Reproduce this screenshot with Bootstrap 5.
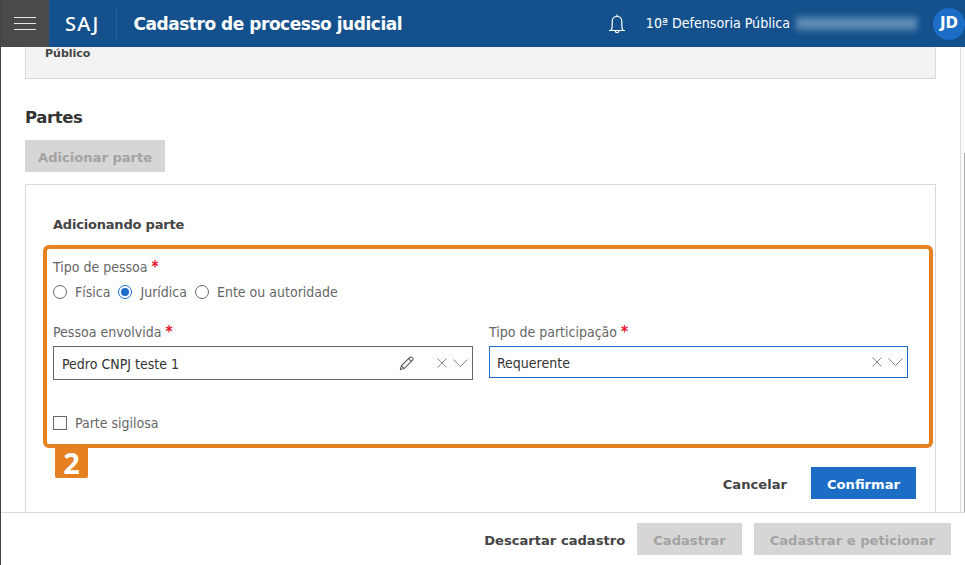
<!DOCTYPE html>
<html lang="pt-BR">
<head>
<meta charset="utf-8">
<title>Cadastro de processo judicial</title>
<link href="https://cdn.jsdelivr.net/npm/bootstrap@5.3.0/dist/css/bootstrap.min.css" rel="stylesheet">
<style>
html,body{height:100%;overflow:hidden}
body{font-family:"DejaVu Sans Condensed","Noto Sans",sans-serif;font-size:14px;color:#666;background:#fff}
.shell{width:965px;height:565px;border-left:1px solid #444}
.topbar{height:47px;background:#14518c;color:#fff}
.menu-btn{width:48px;height:47px;background:#4a4a4a}
.menu-btn span{display:block;width:22px;height:1.5px;background:#e8e8e8;margin-bottom:4.6px}
.menu-btn span:last-child{margin-bottom:0}
.brand{font-family:"Noto Sans",sans-serif;font-size:20px;font-weight:500;letter-spacing:1.2px;margin-left:16px;padding-right:16px;line-height:30px;border-right:1px solid #1d62a6}
.page-title{font-family:"DejaVu Sans",sans-serif;font-weight:700;font-size:17px;margin-left:17px;letter-spacing:-.47px;padding-top:3px}
.org{font-size:14.1px;margin-left:20px}
.blurred{display:inline-block;width:121px;height:13px;margin-left:6px;background:#6a95bd;filter:blur(3px);opacity:.85}
.avatar{width:32px;height:32px;background:#1b6dc6;border-radius:50%;font-family:"DejaVu Sans",sans-serif;font-weight:700;font-size:15px;margin-left:16px}
.main-row{height:465px}
.body-area{flex:1 1 auto;min-width:0;overflow:hidden;padding:0 24px 0 24px;border-right:1px solid #ddd}
.gutter{width:4px;flex:none;background:#fafafa}
.thumb{width:1px;height:359px;margin-left:3px;background:#aaa}
.public-panel{height:32px;background:#f3f3f3;border:1px solid #d9d9d9;border-top:0;padding-left:19px;font-family:"DejaVu Sans",sans-serif;font-weight:700;font-size:11px;color:#444;line-height:14px}
.section-title{font-family:"DejaVu Sans",sans-serif;font-weight:700;font-size:16.5px;color:#333;margin:28px 0 11px;line-height:22px;letter-spacing:-.4px}
.flat-btn{font-family:"DejaVu Sans",sans-serif;font-weight:700;font-size:13.1px;height:32px;padding:4px 16px 0;border:0;border-radius:0}
.flat-btn.off{background:#d6d6d6;color:#a3a3a3}
.flat-btn.main{background:#1b6dc6;color:#fff}
.flat-btn.plain{background:transparent;color:#444;padding:4px 0 0}
.flat-btn.tight{padding:4px 13px 0}
.add-card{margin-top:12px;border:1px solid #d9d9d9;height:340px;padding:0 2px 0 17px}
.card-head{font-family:"DejaVu Sans",sans-serif;font-weight:700;font-size:13px;color:#444;padding:31px 0 0 10px;line-height:18px;letter-spacing:-.2px}
.callout{margin-top:11px;height:203px;border:4px solid #e58120;border-radius:6px;padding:8px 4px 0 6px;position:relative}
.field-label{line-height:20px;margin:0}
.req{color:#e8112d;font-weight:700;font-size:15px;line-height:0}
.radio-row{margin-top:5px}
.radio-item{display:inline-flex;align-items:center;gap:8px;margin-right:8px;line-height:20px}
.radio-dot{width:14px;height:14px;border:1px solid #666;border-radius:50%;background:#fff;flex:none}
.radio-dot.on{border-color:#1b6dc6;padding:2px;background:#1b6dc6;background-clip:content-box}
.fields{margin-top:20px;display:flex;gap:16px}
.field-a{width:420px}
.field-b{width:419px}
.input-box{height:34px;border:1px solid #666;margin-top:4px;padding:0 4px 0 8px;color:#333}
.input-box.focus{height:32px;border-color:#1b6dc6;padding-left:7px}
.input-value{padding-top:2px}
.pencil{margin-right:23px}
.chev{margin-left:6px}
.icon-g{flex:none}
.check-row{margin-top:33px;display:flex;align-items:center;gap:8px;line-height:20px}
.check-box{width:14px;height:14px;border:1px solid #666;flex:none}
.tag{position:absolute;left:8px;top:calc(100% + 4px);width:33px;height:30px;background:#e58120;color:#fff;font-family:"Noto Sans",sans-serif;font-weight:700;font-size:29px;line-height:30px;text-align:center;border-radius:0 0 2px 2px}
.card-actions{margin-top:19px;padding-right:17px;gap:24px}
.footer-bar{height:53px;border-top:1px solid #d9d9d9;background:#fff;padding-right:14px;gap:12px}
</style>
</head>
<body>
<div class="shell">
  <header class="topbar d-flex align-items-center">
    <div class="menu-btn d-flex flex-column align-items-center justify-content-center"><span></span><span></span><span></span></div>
    <div class="brand">SAJ</div>
    <div class="page-title">Cadastro de processo judicial</div>
    <div class="ms-auto d-flex align-items-center">
      <svg width="18" height="22" viewBox="0 0 18 22" fill="none" stroke="#fff" stroke-width="1.2"><path d="M1 17.5h16M3 17.5c1.2-1.4 1.2-3 1.2-5V8.500C4.200 5.500 6.200 3.500 9 3.500s4.800 2 4.800 5v4c0 2 0 3.600 1.200 5"/><path d="M9 1.500v2M7.300 18c0 2.300 3.400 2.300 3.400 0"/></svg>
      <span class="org">10ª Defensoria Pública</span><span class="blurred"></span>
      <div class="avatar d-flex align-items-center justify-content-center">JD</div>
    </div>
  </header>
  <div class="main-row d-flex">
    <div class="body-area">
      <div class="public-panel">Público</div>
      <h2 class="section-title">Partes</h2>
      <button class="flat-btn off tight" type="button">Adicionar parte</button>
      <div class="add-card">
        <div class="card-head">Adicionando parte</div>
        <div class="callout">
          <p class="field-label">Tipo de pessoa <span class="req">*</span></p>
          <div class="radio-row d-flex">
            <span class="radio-item"><span class="radio-dot"></span>Física</span>
            <span class="radio-item"><span class="radio-dot on"></span>Jurídica</span>
            <span class="radio-item"><span class="radio-dot"></span>Ente ou autoridade</span>
          </div>
          <div class="fields">
            <div class="field-a">
              <p class="field-label">Pessoa envolvida <span class="req">*</span></p>
              <div class="input-box d-flex align-items-center">
                <span class="me-auto input-value">Pedro CNPJ teste 1</span>
                <svg class="icon-g pencil" width="15" height="15" viewBox="0 0 16 16" fill="none" stroke="#555" stroke-width="1.100"><path d="M1.500 14.500l1-4L11.500 1.500c.7-.7 1.700-.7 2.400 0l.6.6c.7.7.7 1.700 0 2.400L5.500 13.500z"/><path d="M2.500 10.500l3 3M10.300 2.800l3 3"/></svg>
                <svg class="icon-g" width="10" height="10" viewBox="0 0 10 10" stroke="#888" fill="none"><path d="M.5.5l9 9M9.500.5l-9 9"/></svg>
                <svg class="icon-g chev" width="15" height="8" viewBox="0 0 15 8" stroke="#888" fill="none"><path d="M.5.500l7 7 7-7"/></svg>
              </div>
            </div>
            <div class="field-b">
              <p class="field-label">Tipo de participação <span class="req">*</span></p>
              <div class="input-box focus d-flex align-items-center">
                <span class="me-auto input-value">Requerente</span>
                <svg class="icon-g" width="10" height="10" viewBox="0 0 10 10" stroke="#888" fill="none"><path d="M.5.5l9 9M9.500.5l-9 9"/></svg>
                <svg class="icon-g chev" width="15" height="8" viewBox="0 0 15 8" stroke="#888" fill="none"><path d="M.5.500l7 7 7-7"/></svg>
              </div>
            </div>
          </div>
          <div class="check-row"><span class="check-box"></span>Parte sigilosa</div>
          <div class="tag">2</div>
        </div>
        <div class="card-actions d-flex justify-content-end align-items-center">
          <button class="flat-btn plain" type="button">Cancelar</button>
          <button class="flat-btn main" type="button">Confirmar</button>
        </div>
      </div>
    </div>
    <div class="gutter d-flex flex-column justify-content-end"><div class="thumb"></div></div>
  </div>
  <footer class="footer-bar d-flex justify-content-end align-items-center">
    <button class="flat-btn plain" type="button">Descartar cadastro</button>
    <button class="flat-btn off" type="button">Cadastrar</button>
    <button class="flat-btn off" type="button">Cadastrar e peticionar</button>
  </footer>
</div>
<script src="https://cdn.jsdelivr.net/npm/bootstrap@5.3.0/dist/js/bootstrap.bundle.min.js"></script>
</body>
</html>
